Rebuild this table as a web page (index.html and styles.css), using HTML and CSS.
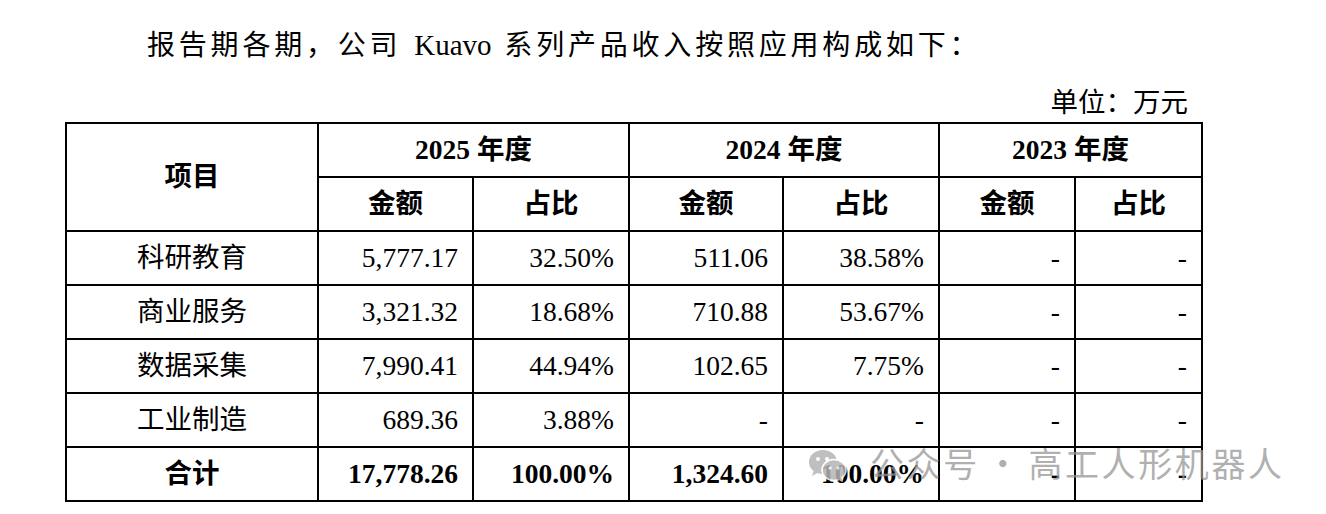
FILE: index.html
```html
<!DOCTYPE html>
<html lang="zh">
<head>
<meta charset="utf-8">
<link rel="stylesheet" href="styles.css">
</head>
<body>
<div class="page">
  <p class="title">报告期各期，公司 <span class="latin">Kuavo</span> 系列产品收入按照应用构成如下：</p>
  <div class="unit">单位：万元</div>
  <table class="data">
    <colgroup>
      <col class="c0"><col class="c1"><col class="c2"><col class="c3"><col class="c4"><col class="c5"><col class="c6">
    </colgroup>
    <thead>
      <tr>
        <th rowspan="2">项目</th>
        <th colspan="2">2025 年度</th>
        <th colspan="2">2024 年度</th>
        <th colspan="2">2023 年度</th>
      </tr>
      <tr>
        <th>金额</th><th>占比</th><th>金额</th><th>占比</th><th>金额</th><th>占比</th>
      </tr>
    </thead>
    <tbody>
      <tr><td class="name">科研教育</td><td>5,777.17</td><td>32.50%</td><td>511.06</td><td>38.58%</td><td>-</td><td>-</td></tr>
      <tr><td class="name">商业服务</td><td>3,321.32</td><td>18.68%</td><td>710.88</td><td>53.67%</td><td>-</td><td>-</td></tr>
      <tr><td class="name">数据采集</td><td>7,990.41</td><td>44.94%</td><td>102.65</td><td>7.75%</td><td>-</td><td>-</td></tr>
      <tr><td class="name">工业制造</td><td>689.36</td><td>3.88%</td><td>-</td><td>-</td><td>-</td><td>-</td></tr>
      <tr class="total"><td class="name">合计</td><td>17,778.26</td><td>100.00%</td><td>1,324.60</td><td>100.00%</td><td>-</td><td>-</td></tr>
    </tbody>
  </table>
  <div class="watermark">
    <svg class="wx" width="40" height="34" viewBox="0 0 40 34">
      <ellipse cx="15" cy="13" rx="14" ry="12" fill="#b4b4b4"/>
      <path d="M6 21 L4 27 L11 23 Z" fill="#b4b4b4"/>
      <ellipse cx="26" cy="21" rx="12" ry="10.5" fill="#b4b4b4" stroke="#fff" stroke-width="1.6"/>
      <path d="M33 28 L35 33 L29 30 Z" fill="#b4b4b4"/>
      <circle cx="10" cy="10" r="2" fill="#fff"/>
      <circle cx="19" cy="10" r="2" fill="#fff"/>
      <circle cx="22" cy="19" r="1.7" fill="#fff"/>
      <circle cx="30" cy="19" r="1.7" fill="#fff"/>
    </svg>
    <span>公众号<span class="dot">·</span>高工人形机器人</span>
  </div>
</div>
</body>
</html>
```

FILE: styles.css
```css
html, body {
  margin: 0;
  padding: 0;
  background: #ffffff;
}
.page {
  position: relative;
  width: 1326px;
  height: 514px;
  padding-top: 26px;
  box-sizing: border-box;
  font-family: "Liberation Serif", "Noto Sans CJK SC", serif;
  color: #000;
}
.title {
  margin: 0;
  padding-left: 147px;
  font-size: 28px;
  line-height: 38px;
  letter-spacing: 3.8px;
  word-spacing: 2px;
}
.title .latin {
  letter-spacing: 0;
  font-size: 29px;
}
.unit {
  margin-top: 20px;
  width: 1188px;
  text-align: right;
  font-size: 27.5px;
  line-height: 36px;
}
.data {
  margin-left: 65px;
  margin-top: 1px;
  border-collapse: collapse;
  table-layout: fixed;
  width: 1136px;
  font-size: 27.5px;
}
.c0 { width: 252px; }
.c1 { width: 155px; }
.c2 { width: 156px; }
.c3 { width: 154px; }
.c4 { width: 156px; }
.c5 { width: 136px; }
.c6 { width: 127px; }
.data th, .data td {
  border: 2px solid #000;
  height: 52px;
  padding: 0 14px 0 0;
  line-height: 30px;
  vertical-align: middle;
}
.data th {
  font-weight: bold;
  text-align: center;
  padding: 0;
}
.data td {
  text-align: right;
  font-weight: normal;
}
.data td.name {
  text-align: center;
  padding: 0;
}
.data tr.total td {
  font-weight: bold;
}
.watermark {
  position: absolute;
  left: 808px;
  top: 441px;
  display: flex;
  align-items: center;
  gap: 22px;
  color: rgba(150, 150, 150, 0.75);
  font-family: "Noto Sans CJK SC", sans-serif;
  font-size: 34px;
  line-height: 44px;
  letter-spacing: 2.6px;
}
.dot {
  margin: 0 6px;
}
.wx {
  opacity: 0.85;
  margin-top: 6px;
}
```
